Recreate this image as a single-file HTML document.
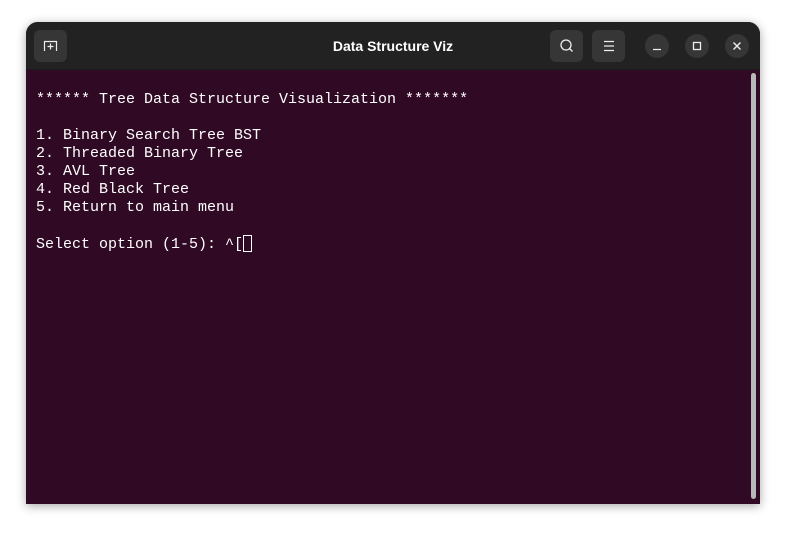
<html><head><style>
body{margin:0;width:786px;height:533px;background:#fff;position:relative;overflow:hidden;font-family:"Liberation Sans",sans-serif}
.win{position:absolute;left:26px;top:22px;width:734px;height:482px;border-radius:12px 12px 0 0;overflow:hidden;background:#300a24;box-shadow:0 2px 10px rgba(0,0,0,.35)}
.tb{position:absolute;left:0;top:0;width:734px;height:47px;background:#222;border-bottom:1px solid #1a1a1a}
.btn{position:absolute;top:8px;width:33px;height:32px;border-radius:6px;background:#363636}
.c{position:absolute;top:12px;width:24px;height:24px;border-radius:50%;background:#363636}
.title{position:absolute;left:0;width:734px;top:16px;text-align:center;color:#fff;font-weight:bold;font-size:14px}
pre{position:absolute;left:10px;top:69px;margin:0;font-family:"Liberation Mono",monospace;font-size:15px;line-height:18px;color:#fff}
.cur{display:inline-block;width:9px;height:17px;border:1px solid #fff;box-sizing:border-box;vertical-align:-4px}
.sb{position:absolute;left:725px;top:51px;width:5px;height:426px;border-radius:3px;background:#b8b8b8}
</style></head><body>
<div class="win">
<div class="tb">
<div class="btn" style="left:8px"><svg width="33" height="32"><path d="M10.5 21V11.5h12V21M16.5 13.5v6M13.5 16.5h6" stroke="#eee" stroke-width="1.2" fill="none"/></svg></div>
<div class="title">Data Structure Viz</div>
<div class="btn" style="left:524px"><svg width="33" height="32"><circle cx="16" cy="15" r="5" stroke="#eee" stroke-width="1.3" fill="none"/><path d="M19.5 18.5l3 3" stroke="#eee" stroke-width="1.3"/></svg></div>
<div class="btn" style="left:566px"><svg width="33" height="32"><path d="M12 11.5h10M12 16h10M12 20.5h10" stroke="#eee" stroke-width="1.2"/></svg></div>
<div class="c" style="left:619px"><svg width="24" height="24"><path d="M8 15.5h8" stroke="#eee" stroke-width="1.3"/></svg></div>
<div class="c" style="left:659px"><svg width="24" height="24"><rect x="8.5" y="8.5" width="7" height="7" stroke="#eee" stroke-width="1.3" fill="none"/></svg></div>
<div class="c" style="left:699px"><svg width="24" height="24"><path d="M8.5 8.5l7 7M15.5 8.5l-7 7" stroke="#eee" stroke-width="1.4"/></svg></div>
</div>
<pre>****** Tree Data Structure Visualization *******

1. Binary Search Tree BST
2. Threaded Binary Tree
3. AVL Tree
4. Red Black Tree
5. Return to main menu

Select option (1-5): ^[<span class="cur"></span></pre>
<div class="sb"></div>
</div>
</body></html>
